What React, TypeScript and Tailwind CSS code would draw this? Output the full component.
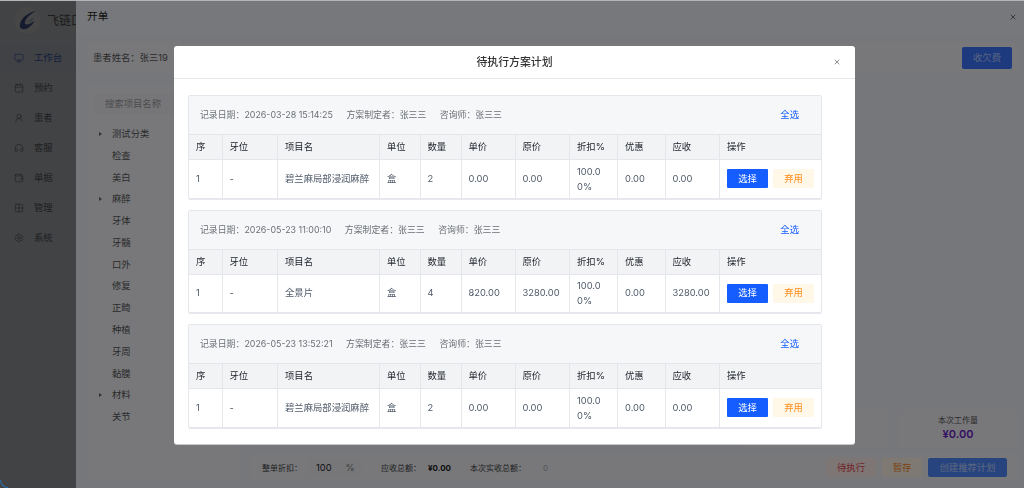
import { Calendar, Grid2x2, Headphones, Monitor, Settings, UserRound, Wallet, X } from 'lucide-react';

const font = "font-['Inter','Noto_Sans_CJK_SC',sans-serif]";

const navItems = [
  { label: '工作台', Icon: Monitor, active: true },
  { label: '预约', Icon: Calendar },
  { label: '患者', Icon: UserRound },
  { label: '客服', Icon: Headphones },
  { label: '单据', Icon: Wallet },
  { label: '管理', Icon: Grid2x2 },
  { label: '系统', Icon: Settings },
];

const categories = [
  { name: '测试分类', arrow: true },
  { name: '检查' },
  { name: '美白' },
  { name: '麻醉', arrow: true },
  { name: '牙体' },
  { name: '牙髓' },
  { name: '口外' },
  { name: '修复' },
  { name: '正畸' },
  { name: '种植' },
  { name: '牙周' },
  { name: '黏膜' },
  { name: '材料', arrow: true },
  { name: '关节' },
];

const plans = [
  { date: '2026-03-28 15:14:25', item: '碧兰麻局部浸润麻醉', qty: '2', price: '0.00', total: '0.00' },
  { date: '2026-05-23 11:00:10', item: '全景片', qty: '4', price: '820.00', total: '3280.00' },
  { date: '2026-05-23 13:52:21', item: '碧兰麻局部浸润麻醉', qty: '2', price: '0.00', total: '0.00' },
];

const columns = [
  { title: '序', width: 'w-[33px]' },
  { title: '牙位', width: 'w-[55.5px]' },
  { title: '项目名', width: 'w-[102px]' },
  { title: '单位', width: 'w-[40.5px]' },
  { title: '数量', width: 'w-[41px]' },
  { title: '单价', width: 'w-[54px]' },
  { title: '原价', width: 'w-[54.5px]' },
  { title: '折扣%', width: 'w-[48px]' },
  { title: '优惠', width: 'w-[47.5px]' },
  { title: '应收', width: 'w-[54.5px]' },
  { title: '操作', width: 'w-[101.5px]' },
];

function Sidebar() {
  return (
    <aside className="w-[76px] h-full shrink-0 bg-[#f2f6fa]">
      <div className="h-[41px] flex items-center pl-[14px] gap-[6px] whitespace-nowrap overflow-hidden">
        <svg viewBox="0 0 28 28" className="w-[27px] h-[27px] shrink-0">
          <circle cx="14" cy="14" r="13.5" fill="#ffffff" />
          <path d="M23 4C15 6 7 11 6 19c-.5 4 4 5 8 3 4-2 6-5 7-8-3 3-7 5-9 4-2-1 0-8 11-14Z" fill="#5060a8" />
          <path d="M21 11c-3 1-6 3-7 5 3 0 6-2 7-5Z" fill="#c0dcec" />
        </svg>
        <span className="text-[12px] text-[#666]">飞链口腔</span>
      </div>
      <nav className="pt-[2px]">
        {navItems.map(({ label, Icon, active }) => (
          <div
            key={label}
            className={`h-[30px] flex items-center pl-[14px] gap-[10px] text-[9.33px] ${active ? 'bg-[#eaf0fc] text-[#4a70d8]' : 'text-[#707378]'}`}
          >
            <Icon className="w-[10px] h-[10px]" strokeWidth={1.5} />
            <span>{label}</span>
          </div>
        ))}
      </nav>
    </aside>
  );
}

function Drawer() {
  return (
    <section className="absolute inset-y-0 left-[76px] right-0 bg-[#eceef6] flex flex-col">
      <header className="h-[34px] shrink-0 flex items-center justify-between pl-[11px] pr-[7px] bg-[#eff0f6] text-[10.67px] text-[#222]">
        <span>开单</span>
        <X className="w-[8px] h-[8px] text-[#333]" />
      </header>
      <div className="h-[31px] ml-[11px] mr-[6px] mt-[8px] shrink-0 flex items-center justify-between pl-[6px] pr-[6px] bg-[#f0f1f7] text-[9.33px] text-[#555]">
        <span>患者姓名：张三19</span>
        <button className="w-[50px] h-[22px] rounded-[2px] bg-[#3a74ff] text-white/60 text-[9.33px]">收欠费</button>
      </div>
      <div className="flex-1 min-h-0 flex gap-[11px] ml-[11px] mr-[6px] mt-[12px] mb-[7px]">
        <div className="w-[152px] shrink-0 bg-[#f0f1f7]">
          <div className="mx-[6px] mt-[9px] h-[20px] pl-[12px] flex items-center bg-[#ecedf3] text-[9.33px] text-[#999]">搜索项目名称</div>
          <ul className="mt-[9px]">
            {categories.map((c) => (
              <li key={c.name} className="h-[21.8px] flex items-center pl-[25px] relative text-[9.33px] text-[#555]">
                {c.arrow && <span className="absolute left-[12px] border-y-[2.5px] border-l-[3.5px] border-y-transparent border-l-[#666]" />}
                {c.name}
              </li>
            ))}
          </ul>
        </div>
        <div className="flex-1 flex flex-col justify-end gap-[6px]">
          <div className="flex justify-end gap-[10px]">
            <div className="h-[39px] w-[150px] bg-[#f0f1f7]" />
            <div className="h-[39px] w-[120px] flex flex-col items-center justify-center bg-[#f0f1f7]">
              <span className="text-[8px] text-[#555]">本次工作量</span>
              <span className="text-[11px] font-semibold text-[#6b21c8]">¥0.00</span>
            </div>
          </div>
          <div className="h-[27px] flex items-center pl-[12px] pr-[11px] bg-[#f0f1f7] text-[8px] text-[#444]">
            <span>整单折扣：</span>
            <span className="w-[54px] h-[19px] flex items-center ml-[6px] pl-[8px] bg-[#eeeff5] text-[#222] text-[9.33px]">
              100<span className="ml-[14px] text-[#777]">%</span>
            </span>
            <span className="ml-[19px]">应收总额：</span>
            <span className="ml-[7px] font-bold text-[#222]">¥0.00</span>
            <span className="ml-[19px]">本次实收总额：</span>
            <span className="ml-[17px] text-[#aaa]">0</span>
            <div className="ml-auto flex gap-[6px]">
              <button className="w-[50px] h-[19px] rounded-[2px] bg-[#fdebea] text-[#e5484d] text-[9.33px]">待执行</button>
              <button className="w-[40px] h-[19px] rounded-[2px] bg-[#fff3e6] text-[#f5871f] text-[9.33px]">暂存</button>
              <button className="w-[79px] h-[19px] rounded-[2px] bg-[#5088ff] text-white/60 text-[9.33px]">创建推荐计划</button>
            </div>
          </div>
        </div>
      </div>
    </section>
  );
}

function PlanCard({ plan }: { plan: (typeof plans)[number] }) {
  const cell = 'border-r border-[#e5e6eb] px-[7px] last:border-r-0';
  return (
    <div className="border border-[#e5e6eb] rounded-[2px] overflow-hidden shadow-[0_1px_0_#e8e9ee]">
      <div className="h-[38px] flex items-center justify-between pl-[11px] pr-[22px] bg-[#f6f7f9] text-[8.9px] text-[#6b6f76]">
        <div className="flex gap-[13.5px]">
          <span>记录日期：{plan.date}</span>
          <span>方案制定者：张三三</span>
          <span>咨询师：张三三</span>
        </div>
        <button className="text-[9.33px] text-[#165dff]">全选</button>
      </div>
      <table className="w-full table-fixed border-collapse text-[9.33px] text-[#4e5969]">
        <colgroup>
          {columns.map((c) => (
            <col key={c.title} className={c.width} />
          ))}
        </colgroup>
        <thead>
          <tr className="h-[25px] bg-[#f2f3f5] border-y border-[#e5e6eb] text-[#1d2129]">
            {columns.map((c) => (
              <th key={c.title} className={`${cell} font-normal text-left`}>{c.title}</th>
            ))}
          </tr>
        </thead>
        <tbody>
          <tr className="h-[38px]">
            <td className={cell}>1</td>
            <td className={cell}>-</td>
            <td className={`${cell} whitespace-nowrap`}>{plan.item}</td>
            <td className={cell}>盒</td>
            <td className={cell}>{plan.qty}</td>
            <td className={cell}>{plan.price}</td>
            <td className={cell}>{plan.total}</td>
            <td className={`${cell} leading-[15px] break-all`}>100.00%</td>
            <td className={cell}>0.00</td>
            <td className={cell}>{plan.total}</td>
            <td className={cell}>
              <div className="flex gap-[5px]">
                <button className="w-[41px] h-[19px] rounded-[1px] bg-[#165dff] text-white">选择</button>
                <button className="w-[41px] h-[19px] rounded-[1px] bg-[#fff7e8] text-[#ff8f1f]">弃用</button>
              </div>
            </td>
          </tr>
        </tbody>
      </table>
    </div>
  );
}

export default function App() {
  return (
    <div className={`relative w-[1024px] h-[488px] overflow-hidden bg-white ${font}`}>
      <Sidebar />
      {/* drawer mask */}
      <div className="absolute inset-0 bg-black/45" />
      <Drawer />
      {/* modal mask */}
      <div className="absolute inset-0 bg-black/50 backdrop-blur-[0.5px]" />
      <div className="absolute top-0 inset-x-0 h-px bg-[#b5b5b8]" />
      <div className="absolute left-0 bottom-0 w-[8px] h-[8px] rounded-bl-[8px] border-l border-b border-[#2a6fb0]" />
      <div className="absolute left-[174px] top-[46px] w-[681px] h-[398px] bg-white rounded-[3px] shadow-[0_1px_0_#c8c9cc]">
        <div className="relative h-[33px] pt-[1px] flex items-center justify-center border-b border-[#e5e6eb] text-[10.9px] font-medium text-[#333]">
          待执行方案计划
          <X className="absolute right-[14px] top-[12px] w-[8px] h-[8px] text-[#555]" />
        </div>
        <div className="flex flex-col gap-[11px] pt-[16px] pl-[14px] pr-[33px]">
          {plans.map((p) => (
            <PlanCard key={p.date} plan={p} />
          ))}
        </div>
      </div>
    </div>
  );
}
